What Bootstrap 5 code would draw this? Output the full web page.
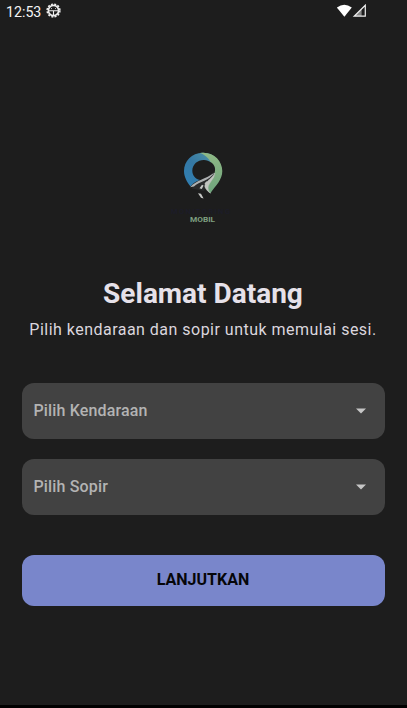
<!DOCTYPE html>
<html lang="id" data-bs-theme="dark">
<head>
<meta charset="utf-8">
<meta name="viewport" content="width=device-width, initial-scale=1">
<title>Selamat Datang</title>
<link href="https://cdn.jsdelivr.net/npm/bootstrap@5.3.0/dist/css/bootstrap.min.css" rel="stylesheet">
<style>
body{background:#1d1d1d;font-family:Roboto,"Liberation Sans",sans-serif;height:708px;border-bottom:3px solid #000;overflow:hidden}
.status{height:22px;padding:0 40px 0 6px;color:#f4f4f4;font-size:14.2px;line-height:22px}
.clock{margin-top:1px}
.brand{margin-top:118px;height:90px;margin-left:160px}
.title{font-size:28px;font-weight:700;line-height:36px;color:#e6e1e9;margin:46px 1px 0 0}
.sub{font-size:16px;line-height:24px;letter-spacing:.48px;color:#dbd6de;margin:6px 1px 0 0;white-space:nowrap}
.fields{margin:40.5px 22.5px 0 21.5px;gap:20px}
.picker{height:56px;border:0;border-radius:12px;background:#424242;color:#b3b3b3;font-size:16px;font-weight:500;letter-spacing:.15px;padding:0 19px 0 12px}
.picker:hover{background:#424242}
.go{height:51px;margin:40px 22.5px 0 21.5px;border:0;border-radius:12px;background:#7986cb;color:#060609;font-size:16px;font-weight:700}
</style>
<script src="https://cdn.jsdelivr.net/npm/bootstrap@5.3.0/dist/js/bootstrap.bundle.min.js" defer></script>
</head>
<body class="d-flex flex-column">
<header class="status d-flex align-items-center justify-content-between">
  <div class="d-flex align-items-center">
    <span class="clock">12:53</span>
    <svg class="ms-1" width="17" height="18" viewBox="0 0 17 18" fill="none" stroke="#eee">
      <circle cx="8.5" cy="8.5" r="5.1" stroke-width="1.6"/>
      <circle cx="8.5" cy="8.5" r="6.4" stroke-width="1.5" stroke-dasharray="2 1.351"/>
      <path d="M3.5 8.8h10M8.5 9v4.5" stroke-width="1.1"/>
      <path d="M6 6.6h1M10 6.6h1" stroke-width=".8"/>
    </svg>
  </div>
  <svg width="30" height="14" viewBox="0 0 30 14">
    <path d="M-.1 3.6Q7.2 -2.2 14.8 3.6L7.4 12.7Z" fill="#fff"/>
    <path d="M28.3 1.2V12.2H17.2Z" fill="none" stroke="#eee" stroke-width="1.2"/>
    <path d="M24.6 5V12H17.5Z" fill="#eee" opacity=".5"/>
  </svg>
</header>
<main class="d-flex flex-column text-center">
  <svg class="brand" width="90" height="90" viewBox="160 140 90 90" role="img">
    <defs>
      <linearGradient id="blue" x1="0" y1="1" x2="1" y2="0"><stop stop-color="#2f80b5"/><stop offset=".5" stop-color="#3578a4"/><stop offset="1" stop-color="#5296a4"/></linearGradient>
      <linearGradient id="green" x1="0" y1="0" x2="0" y2="1"><stop stop-color="#8fb985"/><stop offset="1" stop-color="#6fa47d"/></linearGradient>
    </defs>
    <path d="M205 152.9C193 151.5 184 160.5 184 171C184 177 187 182 190.5 186.5C193.5 182.5 196.5 181.3 200 180C195 179 192.3 175 192.3 170.5C192.5 164 198 159.8 204 160C207 160.2 209 161.2 210.8 162.3L214.5 156.5Q210.5 153.2 205 152.9Z" fill="url(#blue)"/>
    <path d="M200 153C213 151 222.3 160.5 222.3 171C222.3 180 216 185 210.4 193.2C208 191 205.5 189.5 205.6 186.5C205.8 182.5 212 178 214.7 172.5C216 168 214.2 164.3 210.8 162.3C208 157 204 154.5 200 153Z" fill="url(#green)"/>
    <path d="M214.8 173C211 180 198 180.5 191.5 188.5L204 191L206 186C206 181 214.5 179 214.8 173Z" fill="#292a2b"/>
    <path d="M190.3 187.3C195.5 180 206 179.5 214.3 172.5C210 181 199 181 194 186.5Z" fill="#aeb1b2"/>
    <path d="M214.8 173C212 179.5 202 182.5 205.7 188.6Q207.5 191.5 210.4 193.2C203.5 185 214.5 181 214.8 173Z" fill="#c2c4c0" stroke="#c2c4c0" stroke-width=".5"/>
    <path d="M199.5 188.2L202 184.8L203.6 185.4L201.8 189ZM204.4 183.4L206.8 181.2L207.3 182L205.6 184ZM198 193.2L201 193.7L203.6 198.4L201 197.8Z" fill="#c8c9c7"/>
    <text x="171" y="213.5" font-size="7.5" font-weight="500" textLength="59" fill="#1c1c29">MONITORING</text>
    <text x="190" y="222" font-size="6.9" font-weight="700" textLength="25" lengthAdjust="spacingAndGlyphs" fill="#7e9f80">MOBIL</text>
  </svg>
  <h1 class="title">Selamat Datang</h1>
  <p class="sub">Pilih kendaraan dan sopir untuk memulai sesi.</p>
  <div class="fields d-flex flex-column">
    <button type="button" class="picker btn d-flex align-items-center justify-content-between">Pilih Kendaraan
      <svg width="10" height="6" viewBox="0 0 10 6"><path d="M0 .5H10L5 5.5Z" fill="#c6c6c6"/></svg></button>
    <button type="button" class="picker btn d-flex align-items-center justify-content-between">Pilih Sopir
      <svg width="10" height="6" viewBox="0 0 10 6"><path d="M0 .5H10L5 5.5Z" fill="#c6c6c6"/></svg></button>
  </div>
  <button type="button" class="go btn">LANJUTKAN</button>
</main>
</body>
</html>
